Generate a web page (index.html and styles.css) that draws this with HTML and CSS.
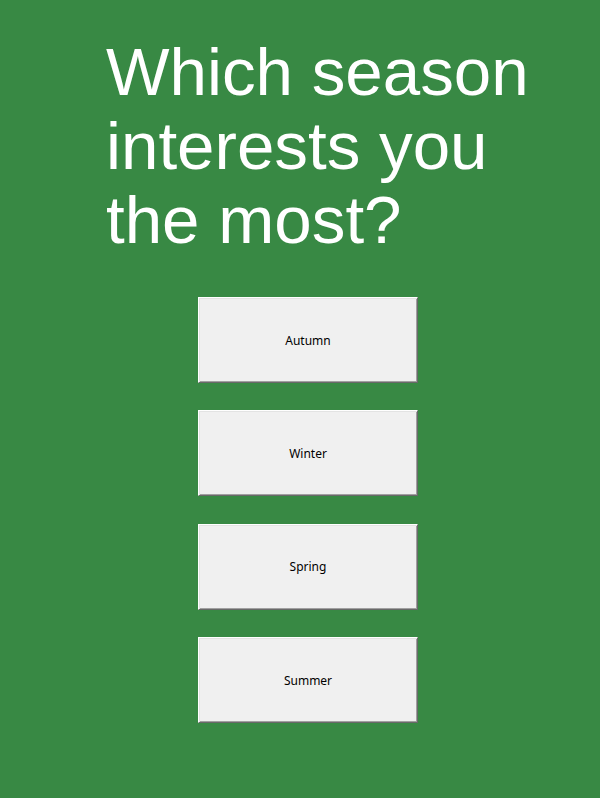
FILE: index.html
```html
<!DOCTYPE html>
<html>
<head>
<meta charset="utf-8">
<link rel="stylesheet" href="styles.css">
</head>
<body>
<div class="page">
  <h1 class="title">Which season interests you the most?</h1>
  <div class="choices">
    <button class="choice">Autumn</button>
    <button class="choice">Winter</button>
    <button class="choice">Spring</button>
    <button class="choice">Summer</button>
  </div>
</div>
</body>
</html>
```

FILE: styles.css
```css
html, body {
  margin: 0;
  padding: 0;
  background: #388944;
}
.page {
  width: 600px;
  height: 798px;
  box-sizing: border-box;
  padding-top: 35px;
}
.title {
  margin: 0 0 0 106px;
  width: 450px;
  font-family: "Liberation Sans", Arial, sans-serif;
  font-weight: normal;
  font-size: 67.3px;
  line-height: 74px;
  color: #ffffff;
}
.choices {
  display: flex;
  flex-direction: column;
  gap: 27.4px;
  margin-top: 40px;
  margin-left: 198px;
}
.choice {
  width: 220px;
  height: 86px;
  box-sizing: border-box;
  background: #f0f0f0;
  border: 1px solid;
  border-color: #ffffff #696969 #696969 #ffffff;
  box-shadow: inset 1px 1px 0 #e3e3e3, inset -1px -1px 0 #a0a0a0;
  font-family: "Noto Sans", "DejaVu Sans", sans-serif;
  font-size: 12px;
  color: #000000;
  padding: 0;
}
```
